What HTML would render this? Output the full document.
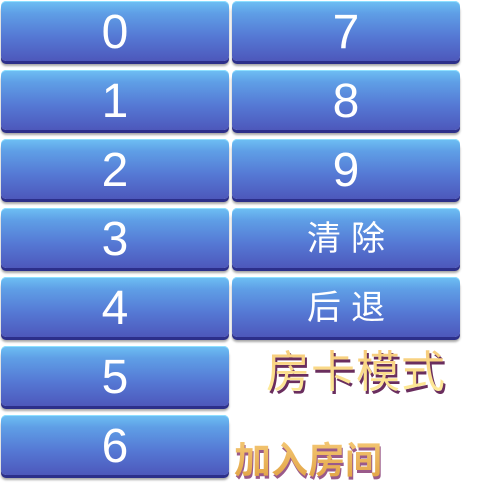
<html><head><style>
body{margin:0;width:491px;height:483px;background:#fff;position:relative;overflow:hidden;font-family:"Liberation Sans","Noto Sans CJK SC",sans-serif}
.b{position:absolute;width:228px;height:60px;border-radius:5px;background:linear-gradient(#6ec0f4 0%,#5f9fe6 20%,#5578d4 60%,#4d58bb 100%);box-shadow:0 3px 0 #2c2f8a,0 5px 2px rgba(0,0,0,.35),inset 0 1px 0 #8fe0ff;color:#fff;text-align:center;line-height:64px;font-size:48px}
.c{font-size:34px;letter-spacing:10px;text-indent:10px;line-height:62px}
.t{position:absolute;font-weight:bold;font-family:"Noto Sans CJK SC",sans-serif;color:#f6d46a;background:linear-gradient(#f4c070,#fff2a0);-webkit-background-clip:text;-webkit-text-fill-color:transparent;filter:drop-shadow(2px 3px 0 #6a2e5e)}
</style></head><body>
<div class="b" style="left:1px;top:1px">0</div>
<div class="b" style="left:1px;top:70px">1</div>
<div class="b" style="left:1px;top:139px">2</div>
<div class="b" style="left:1px;top:208px">3</div>
<div class="b" style="left:1px;top:277px">4</div>
<div class="b" style="left:1px;top:346px">5</div>
<div class="b" style="left:1px;top:415px">6</div>
<div class="b" style="left:232px;top:1px">7</div>
<div class="b" style="left:232px;top:70px">8</div>
<div class="b" style="left:232px;top:139px">9</div>
<div class="b c" style="left:232px;top:208px">清除</div>
<div class="b c" style="left:232px;top:277px">后退</div>
<div class="t" style="left:266px;top:336px;font-size:44px;font-weight:normal;letter-spacing:1px">房卡模式</div>
<div class="t" style="left:234px;top:430px;font-size:37px;background:linear-gradient(#f8d080,#e0a040);-webkit-background-clip:text;filter:drop-shadow(1px 3px 0 #9a5a8a)">加入房间</div>
</body></html>
